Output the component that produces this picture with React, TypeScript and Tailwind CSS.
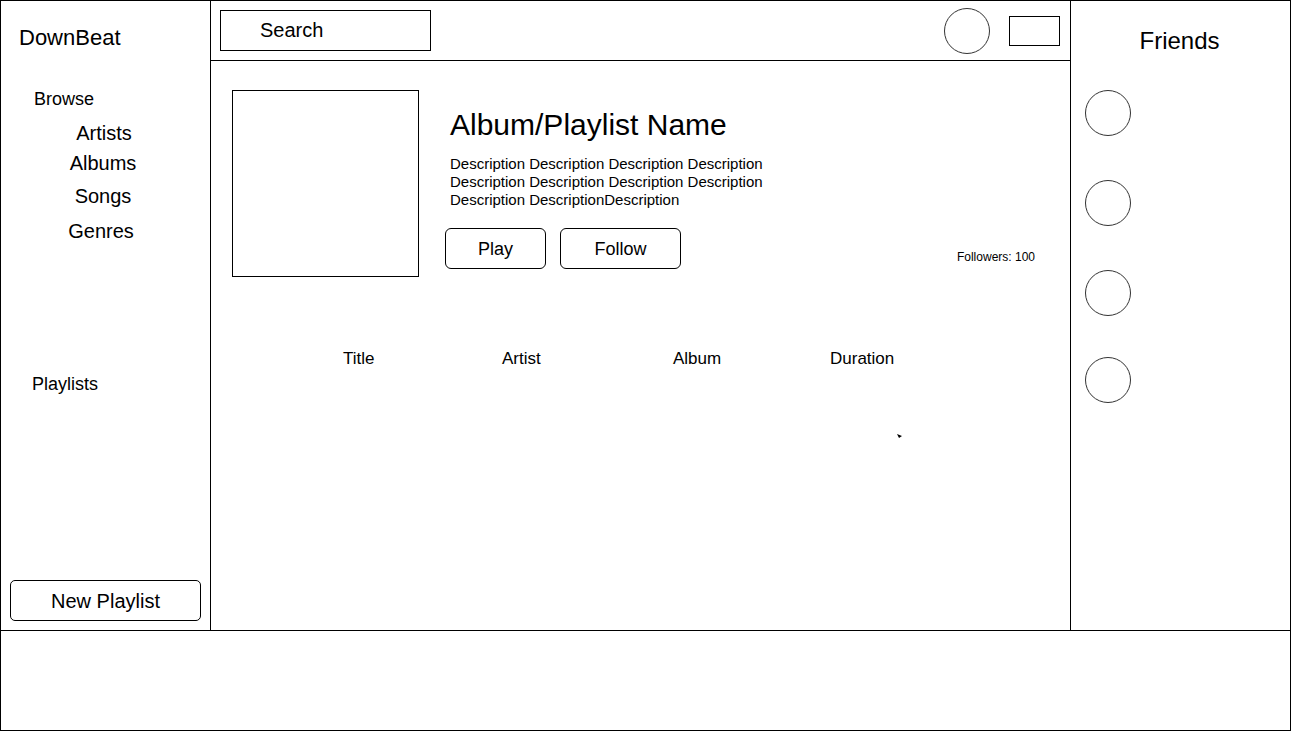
export default function App() {
  const friends = ["mt-[35px]", "mt-[44px]", "mt-[44px]", "mt-[41px]"];

  return (
    <div className="w-[1291px] h-[731px] border border-black bg-white text-black flex flex-col font-['Liberation_Sans',Arial,sans-serif]">
      <div className="flex h-[630px] border-b border-black">
        {/* Sidebar */}
        <aside className="w-[210px] border-r border-black flex flex-col">
          <div className="pt-[25px] pl-[18px] text-[22px] leading-[24px]">DownBeat</div>
          <div className="mt-[39px] pl-[33px] text-[18px] leading-[20px]">Browse</div>
          <nav className="w-[206px] flex flex-col items-center text-[20px] leading-[24px]">
            <span className="mt-[12px]">Artists</span>
            <span className="mt-[6px] pr-[2px]">Albums</span>
            <span className="mt-[9px] pr-[2px]">Songs</span>
            <span className="mt-[11px] pr-[6px]">Genres</span>
          </nav>
          <div className="mt-[131px] pl-[31px] text-[18px] leading-[20px]">Playlists</div>
          <button className="mt-auto mb-[9px] ml-[9px] w-[191px] h-[41px] border border-black rounded-[5px] text-[20px] flex items-center justify-center">
            New Playlist
          </button>
        </aside>

        {/* Main */}
        <main className="w-[860px] border-r border-black flex flex-col">
          <header className="h-[60px] border-b border-black flex items-center pl-[9px] pr-[10px]">
            <div className="w-[211px] h-[41px] border border-black pl-[39px] pb-[2px] text-[20px] flex items-center">Search</div>
            <div className="flex-1" />
            <div className="w-[46px] h-[46px] rounded-full border border-[#333]" />
            <div className="ml-[19px] w-[51px] h-[30px] border border-black" />
          </header>

          <section className="flex pt-[29px] pl-[21px] pr-[35px]">
            <div className="w-[187px] h-[187px] border border-black shrink-0" />
            <div className="ml-[26px] flex flex-col">
              <h1 className="mt-[17px] pl-[5px] text-[30px] leading-[36px]">Album/Playlist Name</h1>
              <p className="mt-[12px] pl-[5px] text-[15px] leading-[18px]">
                Description Description Description Description
                <br />
                Description Description Description Description
                <br />
                Description DescriptionDescription
              </p>
              <div className="mt-[19px] flex gap-[14px] text-[18px]">
                <button className="w-[101px] h-[41px] pt-[2px] border border-black rounded-[6px]">Play</button>
                <button className="w-[121px] h-[41px] pt-[2px] border border-black rounded-[6px]">Follow</button>
              </div>
            </div>
            <div className="ml-auto mt-[160px] text-[12px] leading-[14px]">Followers: 100</div>
          </section>

          <div className="mt-[72px] pl-[132px] flex text-[17px] leading-[20px]">
            <span className="w-[159px]">Title</span>
            <span className="w-[171px]">Artist</span>
            <span className="w-[157px]">Album</span>
            <span>Duration</span>
          </div>

          <svg className="mt-[65px] ml-[686px]" width="6" height="5" viewBox="0 0 6 5">
            <polygon points="0,0 5,2 2,4" fill="black" />
          </svg>
        </main>

        {/* Friends */}
        <aside className="flex-1 flex flex-col">
          <div className="pt-[26px] pr-[2px] text-center text-[24px] leading-[28px]">Friends</div>
          {friends.map((mt, i) => (
            <div key={i} className={`${mt} ml-[14px] w-[46px] h-[46px] rounded-full border border-[#333]`} />
          ))}
        </aside>
      </div>

      {/* Player bar */}
      <footer className="flex-1" />
    </div>
  );
}
